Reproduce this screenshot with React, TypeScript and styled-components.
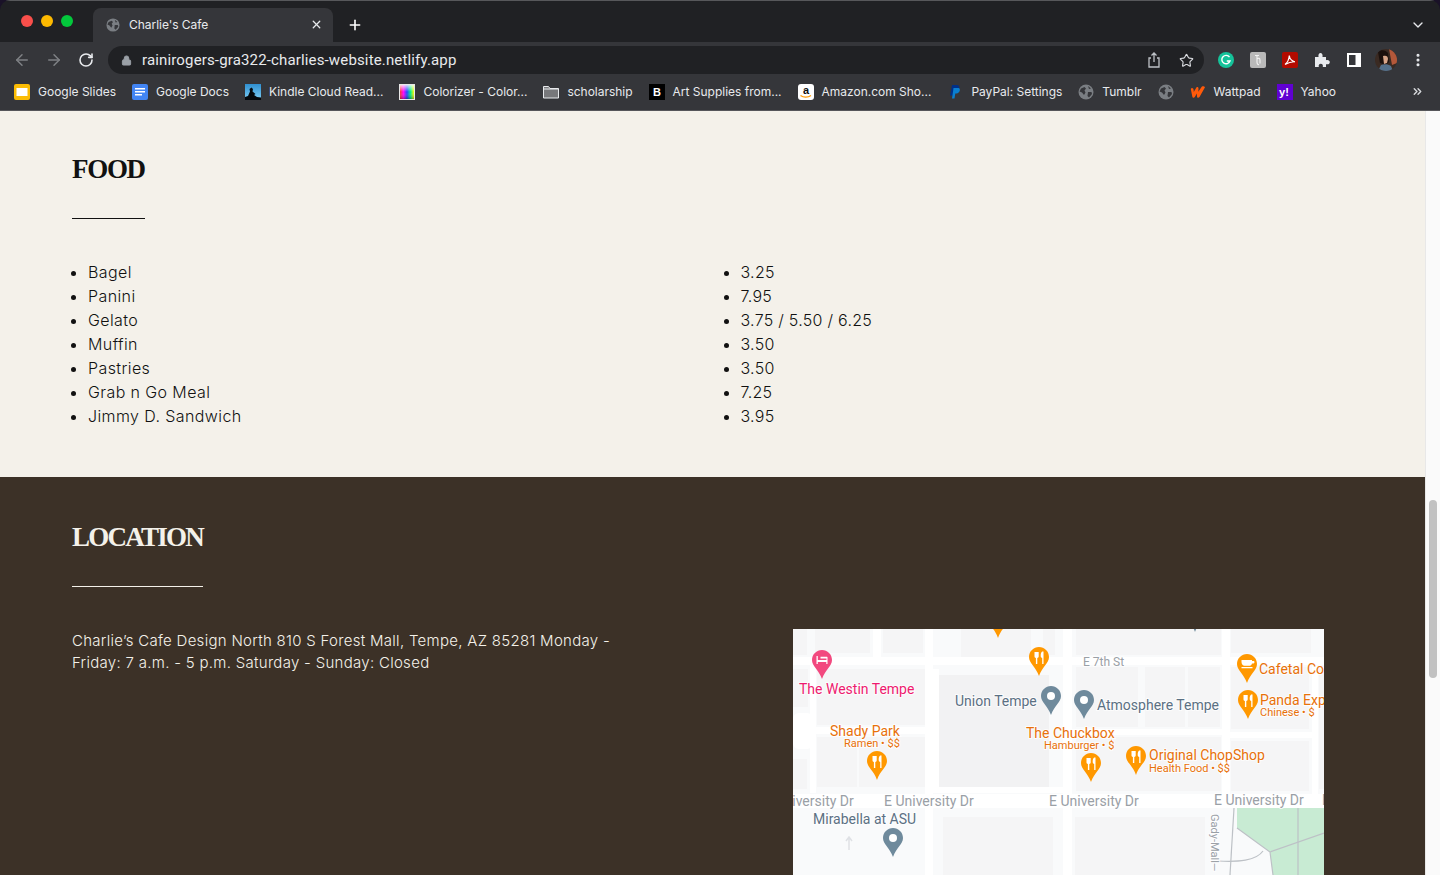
import React from 'react';
import styled, { createGlobalStyle } from 'styled-components';
import { ArrowLeft, ArrowRight, RotateCw, Lock, Star, Plus, X, ChevronDown, ChevronsRight, MoreVertical } from 'lucide-react';

const GlobalStyle = createGlobalStyle`
  html, body { margin: 0; padding: 0; height: 100%; overflow: hidden; background: #1a1228; }
  #root { height: 875px; }
  * { box-sizing: border-box; }
`;

const Window = styled.div`
  width: 1440px;
  height: 875px;
  display: flex;
  flex-direction: column;
  overflow: hidden;
  border-radius: 10px 10px 0 0;
  font-family: Inter, "Liberation Sans", sans-serif;
`;

const TabStrip = styled.div`
  height: 42px;
  flex: none;
  background: #202124;
  border-top: 1px solid #57585b;
  display: flex;
  align-items: flex-end;
  padding: 0 14px 0 21px;
`;

const Lights = styled.div`
  display: flex;
  gap: 8px;
  align-self: flex-start;
  margin-top: 14px;
  width: 72px;
`;

const Light = styled.span<{ $color: string }>`
  width: 12px;
  height: 12px;
  border-radius: 50%;
  background: ${p => p.$color};
`;

const Tab = styled.div`
  width: 240px;
  height: 34px;
  background: #35363a;
  border-radius: 8px 8px 0 0;
  display: flex;
  align-items: center;
  padding: 0 10px 1px 13px;
  gap: 9px;
`;

const TabTitle = styled.span`
  flex: 1;
  color: #e8eaed;
  font-size: 12px;
  letter-spacing: -0.04px;
  white-space: nowrap;
`;

const NewTab = styled.div`
  margin-left: 14px;
  height: 34px;
  display: flex;
  align-items: center;
  color: #fff;
`;

const StripEnd = styled.div`
  margin-left: auto;
  height: 34px;
  display: flex;
  align-items: center;
  color: #e8eaed;
`;

const Toolbar = styled.div`
  height: 36px;
  flex: none;
  background: #35363a;
  display: flex;
  align-items: center;
  padding-left: 6px;
`;

const NavButton = styled.div<{ $on?: boolean }>`
  width: 32px;
  display: flex;
  justify-content: center;
  color: ${p => (p.$on ? '#e8eaed' : '#7e8084')};
`;

const Omnibox = styled.div`
  margin-left: 6px;
  width: 1096px;
  height: 28px;
  border-radius: 14px;
  background: #202124;
  display: flex;
  align-items: center;
  padding: 0 2px 0 13px;
  color: #9aa0a6;
`;

const Url = styled.span`
  margin-left: 10px;
  flex: 1;
  color: #e8eaed;
  font-size: 15px;
  font-family: Roboto, sans-serif;
  letter-spacing: 0.15px;
`;

const OmniIcon = styled.span`
  width: 32px;
  display: flex;
  justify-content: center;
  color: #bdc1c6;
`;

const Extensions = styled.div`
  margin-left: 6px;
  display: flex;
  align-items: center;
`;

const ExtSlot = styled.div`
  width: 32px;
  display: flex;
  justify-content: center;
`;

const BookmarkBar = styled.div`
  height: 33px;
  flex: none;
  background: #35363a;
  border-bottom: 1px solid #55565a;
  display: flex;
  align-items: center;
  padding: 0 16px 5px 14px;
  gap: 16px;
`;

const Bookmark = styled.div`
  display: flex;
  align-items: center;
  gap: 8px;
  color: #e8eaed;
  font-size: 12px;
  letter-spacing: -0.01px;
  white-space: nowrap;
`;

const Overflow = styled.div`
  margin-left: auto;
  color: #d6d8db;
  display: flex;
`;

const Viewport = styled.div`
  flex: 1;
  min-height: 0;
  display: flex;
`;

const Page = styled.main`
  width: 1425px;
  display: flex;
  flex-direction: column;
  overflow: hidden;
`;

const Scrollbar = styled.div`
  width: 15px;
  background: #fafafa;
  border-left: 1px solid #e8e8e8;
  padding-top: 389px;
  padding-left: 3px;
`;

const Thumb = styled.div`
  width: 8px;
  height: 178px;
  border-radius: 4px;
  background: #c1c1c1;
`;

const FoodSection = styled.section`
  height: 366px;
  flex: none;
  background: #f4f1ea;
  color: #111;
  padding: 42px 0 0 72px;
`;

const LocationSection = styled.section`
  flex: 1;
  background: #3c3127;
  color: #f4f1ea;
  padding: 44px 0 0 72px;
`;

const Heading = styled.h2<{ $tracking: number }>`
  display: inline-block;
  margin: 0;
  height: 66px;
  border-bottom: 1px solid currentColor;
  font-family: "Liberation Serif", serif;
  font-weight: 700;
  font-size: 27px;
  line-height: 32px;
  letter-spacing: ${p => p.$tracking}px;
`;

const MenuGrid = styled.div`
  display: grid;
  grid-template-columns: 652.5px 1fr;
  margin-top: 41px;
`;

const MenuList = styled.ul<{ $tracking: number }>`
  margin: 0;
  padding: 0 0 0 16px;
  font-size: 16px;
  font-weight: 300;
  line-height: 24px;
  letter-spacing: ${p => p.$tracking}px;
  color: #111;
`;

const LocationRow = styled.div`
  display: flex;
  margin-top: 42px;
`;

const Address = styled.p`
  margin: 0;
  width: 721px;
  padding: 1px 165px 0 0;
  font-size: 15px;
  font-weight: 300;
  line-height: 22px;
  letter-spacing: 0.29px;
`;

const MapFrame = styled.div`
  width: 531px;
  height: 246px;
  overflow: hidden;
  background: #f9fafb;
`;

const MapSvg = styled.svg`
  display: block;
  font-family: Roboto, sans-serif;
`;

const MapLabel = styled.text<{ $color: string; $size: number }>`
  fill: ${p => p.$color};
  font-size: ${p => p.$size}px;
  stroke: #fff;
  stroke-width: 2px;
  stroke-opacity: 0.75;
  paint-order: stroke;
`;

const Globe = ({ size = 16 }: { size?: number }) => (
  <svg width={size} height={size} viewBox="0 0 16 16">
    <circle cx="8" cy="8" r="7.500" fill="#7a7e83" />
    <path d="M3 4.500 6.500 3 8 4.500 6.500 6.500 7.500 8.500 6 11 4 8.500 1.600 7.500ZM10 8h3.500l.5 2-3 3.400-1.500-1.400ZM10 2l3 2.500-2 .5Z" fill="#35363a" />
  </svg>
);

const icons: Record<string, React.ReactNode> = {
  slides: (
    <svg width="16" height="16" viewBox="0 0 16 16">
      <rect width="16" height="16" rx="2" fill="#fbbc04" />
      <rect x="2.500" y="4" width="11" height="8" fill="#fff" />
    </svg>
  ),
  docs: (
    <svg width="16" height="16" viewBox="0 0 16 16">
      <rect width="16" height="16" rx="2" fill="#4285f4" />
      <path d="M3 4h10v1.600H3ZM3 7h10v1.600H3ZM3 10h7v1.600H3Z" fill="#fff" />
    </svg>
  ),
  kindle: (
    <svg width="16" height="16" viewBox="0 0 16 16">
      <defs>
        <linearGradient id="kd" x1="0" y1="0" x2="0" y2="1">
          <stop offset="0" stopColor="#2f8fd0" />
          <stop offset="1" stopColor="#7fd0f5" />
        </linearGradient>
      </defs>
      <rect width="16" height="16" fill="url(#kd)" />
      <path d="M0 16v-3l3-1 2-4.500-.5-2.500 2-1.500L8 5l-.5 2.500 3 2.500L9 11l3 2 4 .5V16Z" fill="#04090d" />
    </svg>
  ),
  colorizer: (
    <svg width="16" height="16" viewBox="0 0 16 16">
      <defs>
        <linearGradient id="cz" x1="0" y1="0" x2="1" y2="0">
          <stop offset="0" stopColor="#ff2d2d" />
          <stop offset="0.250" stopColor="#f0f" />
          <stop offset="0.500" stopColor="#24f" />
          <stop offset="0.750" stopColor="#0e8" />
          <stop offset="1" stopColor="#ff0" />
        </linearGradient>
        <linearGradient id="czw" x1="0" y1="0" x2="0" y2="1">
          <stop offset="0" stopColor="#fff" stopOpacity="0.800" />
          <stop offset="0.500" stopColor="#fff" stopOpacity="0" />
          <stop offset="1" stopColor="#000" stopOpacity="0.350" />
        </linearGradient>
      </defs>
      <rect width="16" height="16" fill="#e8e8e8" />
      <rect x="1" y="1" width="14" height="14" fill="url(#cz)" />
      <rect x="1" y="1" width="14" height="14" fill="url(#czw)" />
    </svg>
  ),
  folder: (
    <svg width="16" height="16" viewBox="0 0 16 16">
      <path d="M.5 2.500h5l1.500 2h8.500v9.500H.5Z" fill="#77787b" stroke="#e8eaed" />
      <path d="M.5 5h15" stroke="#e8eaed" />
    </svg>
  ),
  art: (
    <svg width="16" height="16" viewBox="0 0 16 16">
      <rect width="16" height="16" fill="#000" />
      <text x="8" y="12" textAnchor="middle" fontFamily="Liberation Sans" fontWeight="700" fontSize="11" fill="#fff">B</text>
    </svg>
  ),
  amazon: (
    <svg width="16" height="16" viewBox="0 0 16 16">
      <rect width="16" height="16" rx="3" fill="#fff" />
      <text x="8" y="10" textAnchor="middle" fontFamily="Liberation Sans" fontWeight="700" fontSize="11" fill="#111">a</text>
      <path d="M2.500 11.500c3 2.200 7.500 2.200 10.500 0" stroke="#f90" strokeWidth="1.400" fill="none" />
    </svg>
  ),
  paypal: (
    <svg width="16" height="16" viewBox="0 0 16 16">
      <path d="M5 1h5c3 0 3.500 4.500-.5 5.500H7L6 11.500H3Z" fill="#003087" />
      <path d="M6.500 4h5c2.500.5 1.500 5-2 5.500H8.300l-.8 5H5Z" fill="#0a7fd0" />
    </svg>
  ),
  wattpad: (
    <svg width="16" height="16" viewBox="0 0 16 16">
      <path d="M.8 5C1.500 3 3.600 4 3.600 6l.2 2 2.600-4.500c1-1 2.200-.2 2.100 1l-.2 3.200 3.400-5c1.300-1 3 0 3.300.6L9.500 13c-1 1.300-2.400.8-2.500-.6L6.900 9.500 4.800 13c-.9 1.200-2.300.7-2.500-.6Z" fill="#ff5a0a" />
    </svg>
  ),
  yahoo: (
    <svg width="16" height="16" viewBox="0 0 16 16">
      <rect width="16" height="16" fill="#6001d2" />
      <text x="7" y="12" textAnchor="middle" fontFamily="Liberation Sans" fontWeight="700" fontSize="11" fill="#fff">y!</text>
    </svg>
  ),
  globe: <Globe />,
};

const bookmarks: { icon: string; label?: string }[] = [
  { icon: 'slides', label: 'Google Slides' },
  { icon: 'docs', label: 'Google Docs' },
  { icon: 'kindle', label: 'Kindle Cloud Read...' },
  { icon: 'colorizer', label: 'Colorizer - Color...' },
  { icon: 'folder', label: 'scholarship' },
  { icon: 'art', label: 'Art Supplies from...' },
  { icon: 'amazon', label: 'Amazon.com Sho...' },
  { icon: 'paypal', label: 'PayPal: Settings' },
  { icon: 'globe', label: 'Tumblr' },
  { icon: 'globe' },
  { icon: 'wattpad', label: 'Wattpad' },
  { icon: 'yahoo', label: 'Yahoo' },
];

const foods = ['Bagel', 'Panini', 'Gelato', 'Muffin', 'Pastries', 'Grab n Go Meal', 'Jimmy D. Sandwich'];
const prices = ['3.25', '7.95', '3.75 / 5.50 / 6.25', '3.50', '3.50', '7.25', '3.95'];

const ORANGE = '#e8710a';
const SLATE = '#5b7083';
const ROAD = '#9aa0a6';
const PINK = '#ee1a6f';

// x, y is the baseline in map coordinates
const labels: { text: string; x: number; y: number; color: string; size: number }[] = [
  { text: 'The Westin Tempe', x: 6, y: 65, color: PINK, size: 14 },
  { text: 'Union Tempe', x: 162, y: 77, color: SLATE, size: 14 },
  { text: 'Shady Park', x: 37, y: 107, color: ORANGE, size: 14 },
  { text: 'Ramen • $$', x: 51, y: 118, color: ORANGE, size: 11 },
  { text: 'E University Dr', x: -29, y: 177, color: ROAD, size: 14 },
  { text: 'E University Dr', x: 91, y: 177, color: ROAD, size: 14 },
  { text: 'E University Dr', x: 256, y: 177, color: ROAD, size: 14 },
  { text: 'E University Dr', x: 421, y: 176, color: ROAD, size: 14 },
  { text: 'E University Dr', x: 529, y: 176, color: ROAD, size: 14 },
  { text: 'Mirabella at ASU', x: 20, y: 195, color: SLATE, size: 14 },
  { text: 'E 7th St', x: 290, y: 37, color: ROAD, size: 12 },
  { text: 'The Chuckbox', x: 233, y: 109, color: ORANGE, size: 14 },
  { text: 'Hamburger • $', x: 251, y: 120, color: ORANGE, size: 11 },
  { text: 'Atmosphere Tempe', x: 304, y: 81, color: SLATE, size: 14 },
  { text: 'Cafetal Coffee', x: 466, y: 45, color: ORANGE, size: 14 },
  { text: 'Panda Express', x: 467, y: 76, color: ORANGE, size: 14 },
  { text: 'Chinese • $', x: 467, y: 87, color: ORANGE, size: 11 },
  { text: 'Original ChopShop', x: 356, y: 131, color: ORANGE, size: 14 },
  { text: 'Health Food • $$', x: 356, y: 143, color: ORANGE, size: 11 },
];

const pins: { x: number; y: number; color: string; kind: 'food' | 'dot' | 'bed' | 'cup' }[] = [
  { x: 19, y: 21, color: '#f2497f', kind: 'bed' },
  { x: 195, y: -20, color: '#ff9800', kind: 'food' },
  { x: 236, y: 18, color: '#ff9800', kind: 'food' },
  { x: 248, y: 57, color: '#6f8a9c', kind: 'dot' },
  { x: 74, y: 122, color: '#ff9800', kind: 'food' },
  { x: 90, y: 199, color: '#6f8a9c', kind: 'dot' },
  { x: 392, y: -26, color: '#6f8a9c', kind: 'dot' },
  { x: 281, y: 61, color: '#6f8a9c', kind: 'dot' },
  { x: 444, y: 25, color: '#ff9800', kind: 'cup' },
  { x: 445, y: 61, color: '#ff9800', kind: 'food' },
  { x: 333, y: 117, color: '#ff9800', kind: 'food' },
  { x: 288, y: 124, color: '#ff9800', kind: 'food' },
];

// map blocks, a touch darker than the ground
const blocks = [
  [0, 0, 14, 26], [22, 0, 55, 24], [90, 0, 40, 24], [168, 0, 70, 28], [250, 0, 12, 26],
  [283, 0, 145, 26], [438, 0, 80, 24],
  [0, 40, 15, 38], [24, 40, 108, 56], [24, 108, 40, 50], [66, 108, 66, 50], [0, 130, 14, 30],
  [283, 38, 62, 60], [352, 38, 40, 60], [395, 38, 32, 60],
  [283, 108, 145, 54], [438, 112, 78, 50], [438, 38, 78, 62], [526, 40, 5, 120],
  [150, 188, 110, 58], [282, 188, 130, 58],
];

const Pin = ({ x, y, color, kind }: (typeof pins)[number]) => (
  <g transform={`translate(${x} ${y})`}>
    <path d="M10 0C4.500 0 0 4.400 0 9.900c0 6.400 6.700 9.300 10 19.100 3.300-9.800 10-12.700 10-19.100C20 4.400 15.500 0 10 0Z" fill={color} />
    {kind === 'dot' && <circle cx="10" cy="10" r="4" fill="#fff" />}
    {kind === 'food' && (
      <path d="M5.500 5v4.300c0 1 .6 1.500 1.400 1.700V17h1.400v-6c.8-.2 1.400-.7 1.400-1.700V5ZM13.200 4.500c-1.200.6-1.500 2.500-1.500 4.500 0 1.200.6 1.800 1.500 2v6h1.300V4.500Z" fill="#fff" />
    )}
    {kind === 'bed' && (
      <path d="M4.500 6h1.300v4h8.700V8.500h-6V6.800h6.500c.3 0 .5.300.5.600V14h-1.200v-2H5.800v2H4.500Z" fill="#fff" />
    )}
    {kind === 'cup' && (
      <path d="M4.500 6H15v1h1.500c.5 0 1 .5 1 1s-.5 1.500-1 1.500H15c-.3 1.500-1.500 2.300-3 2.300H7.500C6 11.800 4.500 10 4.500 8ZM4.500 13h11v1.200h-11Z" fill="#fff" />
    )}
  </g>
);

const MapArt = () => (
  <MapSvg width="531" height="246" viewBox="0 0 531 246">
    {blocks.map(([x, y, w, h]) => (
      <rect key={`${x}-${y}`} x={x} y={y} width={w} height={h} fill="#f5f5f6" />
    ))}
    <rect x="146" y="46" width="110" height="112" fill="#f2f2f3" />
    {/* roads */}
    <g fill="#fff">
      <rect x="0" y="28" width="531" height="8" />
      <rect x="0" y="165" width="531" height="14" />
      <rect x="132" y="0" width="8" height="246" />
      <rect x="17" y="34" width="6" height="130" />
      <rect x="80" y="0" width="8" height="30" />
      <rect x="270" y="0" width="9" height="246" />
      <rect x="429" y="0" width="8" height="170" />
      <rect x="519" y="37" width="6" height="130" />
      <rect x="18" y="98" width="114" height="7" />
      <rect x="279" y="100" width="150" height="6" />
      <rect x="437" y="103" width="82" height="6" />
      <rect x="140" y="40" width="6" height="124" />
      <rect x="140" y="158" width="132" height="6" />
      <rect x="0" y="84" width="20" height="36" rx="6" />
    </g>
    <polygon points="444,179 531,179 531,246 480,246 477,223 444,199" fill="#c8ebd3" />
    <g fill="none" stroke="#bdc1c6" strokeWidth="1.200">
      <path d="M441 179 437 246" />
      <path d="M444 199 477 223 480 246" />
      <path d="M477 223 531 204" />
      <path d="M505 179V246" />
      <path d="M425 232c20 1 38 0 45-10" />
    </g>
    <path d="M56 208v13M53 212l3-4 3 4" stroke="#dfe1e5" strokeWidth="1.500" fill="none" />
    {pins.map(pin => (
      <Pin key={`${pin.x}-${pin.y}`} {...pin} />
    ))}
    {labels.map(l => (
      <MapLabel key={`${l.text}-${l.x}`} x={l.x} y={l.y} $color={l.color} $size={l.size}>
        {l.text}
      </MapLabel>
    ))}
    <MapLabel x={0} y={0} $color={ROAD} $size={11} transform="translate(418 185) rotate(90)">
      Gady-Mall—
    </MapLabel>
  </MapSvg>
);

export default function App() {
  return (
    <Window>
      <GlobalStyle />
      <TabStrip>
        <Lights>
          <Light $color="#f94f4b" />
          <Light $color="#fdb900" />
          <Light $color="#03c83c" />
        </Lights>
        <Tab>
          <Globe size={14} />
          <TabTitle>Charlie's Cafe</TabTitle>
          <X size={13} color="#e8eaed" strokeWidth={2.4} />
        </Tab>
        <NewTab>
          <Plus size={16} strokeWidth={2.4} />
        </NewTab>
        <StripEnd>
          <ChevronDown size={16} strokeWidth={2} />
        </StripEnd>
      </TabStrip>

      <Toolbar>
        <NavButton>
          <ArrowLeft size={18} />
        </NavButton>
        <NavButton>
          <ArrowRight size={18} />
        </NavButton>
        <NavButton $on>
          <RotateCw size={16} strokeWidth={2.4} />
        </NavButton>
        <Omnibox>
          <Lock size={11} fill="#9aa0a6" strokeWidth={2} />
          <Url>rainirogers-gra322-charlies-website.netlify.app</Url>
          <OmniIcon>
            <svg width="14" height="16" viewBox="0 0 14 16" fill="none" stroke="#bdc1c6" strokeWidth="1.300">
              <path d="M4 6H2v9h10V6h-2M7 10V1M4.500 3.500 7 1l2.500 2.500" />
            </svg>
          </OmniIcon>
          <OmniIcon>
            <Star size={15} strokeWidth={1.8} color="#dadce0" />
          </OmniIcon>
        </Omnibox>
        <Extensions>
          <ExtSlot>
            <svg width="16" height="16" viewBox="0 0 16 16">
              <circle cx="8" cy="8" r="8" fill="#15c39a" />
              <path d="M11.500 5.200A4.200 4.200 0 1 0 12 9H8.800" stroke="#fff" strokeWidth="1.400" fill="none" />
            </svg>
          </ExtSlot>
          <ExtSlot>
            <svg width="16" height="16" viewBox="0 0 16 16">
              <rect width="16" height="16" rx="2" fill="#b9b9b9" />
              <path d="M5 3.500h4M7 3v7c0 2 1 3 2 2.500M7 7c1.500-1.200 3-.8 3 1v3.500" stroke="#f2f2f2" strokeWidth="1.100" fill="none" />
            </svg>
          </ExtSlot>
          <ExtSlot>
            <svg width="16" height="16" viewBox="0 0 16 16">
              <rect width="16" height="16" rx="2" fill="#b30b00" />
              <path d="M3 12.500C5 11 7 7 7.300 3.500c.2 3 2.600 6 5.700 6.300-3-.2-6.500.7-10 2.700Z" fill="none" stroke="#fff" strokeWidth="1.200" />
            </svg>
          </ExtSlot>
          <ExtSlot>
            <svg width="16" height="16" viewBox="0 0 16 16">
              <path d="M1 5h3.500C4 2.500 5.200 1 6.500 1S9 2.500 8.500 5H12v3.200c2.500-.6 3.800.6 3.800 2s-1.300 2.600-3.800 2V15H8.800c.5-2.300-.6-3.300-2-3.300s-2.500 1-2 3.300H1Z" fill="#e8eaed" />
            </svg>
          </ExtSlot>
          <ExtSlot>
            <svg width="14" height="14" viewBox="0 0 14 14">
              <path d="M0 0h14v14H0Z" fill="#fff" />
              <path d="M2 2h6.500v10H2Z" fill="#35363a" />
            </svg>
          </ExtSlot>
          <ExtSlot>
            <svg width="22" height="22" viewBox="0 0 22 22">
              <defs>
                <clipPath id="avatar">
                  <circle cx="11" cy="11" r="11" />
                </clipPath>
              </defs>
              <g clipPath="url(#avatar)">
                <rect width="22" height="22" fill="#3a2a22" />
                <path d="M14 0h8v14l-5 2Z" fill="#b4583a" />
                <path d="M3 3c3-3 8-2 10 1l1 9-3 3-6-2Z" fill="#1c110d" />
                <path d="M8 7c3-1 5 0 5 3l-1 4-3 1Z" fill="#d8a588" />
                <path d="M3 22l3-6c3-1 7-1 10 1l2 5Z" fill="#55708a" />
              </g>
            </svg>
          </ExtSlot>
          <ExtSlot>
            <MoreVertical size={16} color="#e8eaed" strokeWidth={2.6} />
          </ExtSlot>
        </Extensions>
      </Toolbar>

      <BookmarkBar>
        {bookmarks.map((b, i) => (
          <Bookmark key={i}>
            {icons[b.icon]}
            {b.label}
          </Bookmark>
        ))}
        <Overflow>
          <ChevronsRight size={13} strokeWidth={2.6} />
        </Overflow>
      </BookmarkBar>

      <Viewport>
        <Page>
          <FoodSection>
            <Heading $tracking={-1.3}>FOOD</Heading>
            <MenuGrid>
              <MenuList $tracking={0.4}>
                {foods.map(f => (
                  <li key={f}>{f}</li>
                ))}
              </MenuList>
              <MenuList $tracking={0.27}>
                {prices.map((p, i) => (
                  <li key={i}>{p}</li>
                ))}
              </MenuList>
            </MenuGrid>
          </FoodSection>
          <LocationSection>
            <Heading $tracking={-1.75}>LOCATION</Heading>
            <LocationRow>
              <Address>
                Charlie’s Cafe Design North 810 S Forest Mall, Tempe, AZ 85281 Monday - Friday: 7 a.m. - 5 p.m. Saturday - Sunday: Closed
              </Address>
              <MapFrame>
                <MapArt />
              </MapFrame>
            </LocationRow>
          </LocationSection>
        </Page>
        <Scrollbar>
          <Thumb />
        </Scrollbar>
      </Viewport>
    </Window>
  );
}
